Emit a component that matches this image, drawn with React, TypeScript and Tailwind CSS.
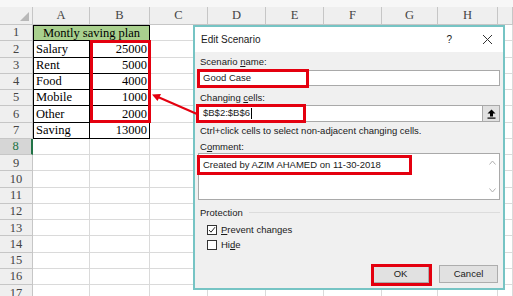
import React from "react";

const colWidths = "grid-cols-[33px_57px_60px_58px_58px_58px_58px_56px_60px_1fr]";
const letters = ["A", "B", "C", "D", "E", "F", "G", "H", ""];

const data: { label: string; value: string }[] = [
  { label: "Salary", value: "25000" },
  { label: "Rent", value: "5000" },
  { label: "Food", value: "4000" },
  { label: "Mobile", value: "1000" },
  { label: "Other", value: "2000" },
  { label: "Saving", value: "13000" },
];

function Sheet() {
  const rows = Array.from({ length: 17 }, (_, i) => i + 1);
  return (
    <div className="flex flex-col font-['Liberation_Serif',serif] text-[12.5px] text-black">
      <div className="h-[7px] bg-[#f7f7f7]" />
      <div className={`grid ${colWidths} h-[18px] bg-[#efefef] text-[#444]`}>
        <div className="relative border-r border-b border-[#c6c6c6]">
          <div className="absolute right-[3px] bottom-[3px] w-0 h-0 border-l-[9px] border-l-transparent border-b-[9px] border-b-[#b8b8b8]" />
        </div>
        {letters.map((l, i) => (
          <div key={i} className="flex items-center justify-center border-r border-b border-[#c6c6c6] leading-none">
            {l}
          </div>
        ))}
      </div>
      <div className={`grid ${colWidths} grid-rows-[repeat(17,16.27px)]`}>
        {rows.map((r) => {
          const selected = r === 8;
          const header = (
            <div
              key={`h${r}`}
              className={
                selected
                  ? "flex items-center justify-center bg-[#d6d6d6] text-[#217346] border-b border-[#c6c6c6] border-r-2 border-r-[#217346] leading-none"
                  : "flex items-center justify-center bg-[#efefef] text-[#444] border-r border-b border-[#c6c6c6] leading-none"
              }
            >
              {r}
            </div>
          );
          if (r === 1) {
            return (
              <React.Fragment key={r}>
                {header}
                <div className="col-span-2 flex items-center justify-center bg-[#a9d08e] border border-black leading-none">
                  Montly saving plan
                </div>
                {letters.slice(2).map((_, i) => (
                  <div key={i} className="border-r border-b border-[#dadada]" />
                ))}
              </React.Fragment>
            );
          }
          if (r <= 7) {
            const d = data[r - 2];
            return (
              <React.Fragment key={r}>
                {header}
                <div className="flex items-center pl-[2px] border-l border-r border-b border-black leading-none">
                  {d.label}
                </div>
                <div className="flex items-center justify-end pr-[2px] border-r border-b border-black leading-none">
                  {d.value}
                </div>
                {letters.slice(2).map((_, i) => (
                  <div key={i} className="border-r border-b border-[#dadada]" />
                ))}
              </React.Fragment>
            );
          }
          return (
            <React.Fragment key={r}>
              {header}
              {letters.map((_, i) => (
                <div key={i} className="border-r border-b border-[#dadada]" />
              ))}
            </React.Fragment>
          );
        })}
      </div>
    </div>
  );
}

function RedBox({ className }: { className: string }) {
  return <div className={`absolute border-[3px] border-[#e4000f] pointer-events-none ${className}`} />;
}

function Dialog() {
  return (
    <div className="absolute left-[193px] top-[25px] w-[312px] h-[265px] flex flex-col border-2 border-[#76c4c4] bg-[#f0f0f0] font-['Liberation_Sans',sans-serif] text-[9.5px] text-[#1a1a1a]">
      <div className="shrink-0 flex items-center h-[25px] bg-white pl-[6px] pr-[8px]">
        <span className="text-[10px]">Edit Scenario</span>
        <span className="ml-auto mr-[30px] text-[10px]">?</span>
        <svg width="11" height="11" viewBox="0 0 11 11" className="mr-[2px]">
          <path d="M1 1 L10 10 M10 1 L1 10" stroke="#333" strokeWidth="1" />
        </svg>
      </div>
      <div className="shrink-0 flex flex-col px-[3px] pt-[4px]">
        <div className="shrink-0 pl-[2px] h-[11px] leading-[11px]">
          Scenario <span className="underline">n</span>ame:
        </div>
        <div className="shrink-0 relative mt-[3px] h-[16px] bg-white border border-[#a9a9a9] flex items-center pl-[4px]">
          Good Case
          <RedBox className="left-[-2px] top-[-2px] w-[112px] h-[19px]" />
        </div>
        <div className="shrink-0 pl-[2px] mt-[6px] h-[11px] leading-[11px]">
          Changing <span className="underline">c</span>ells:
        </div>
        <div className="shrink-0 relative mt-[2px] h-[17px] flex">
          <div className="flex-1 bg-white border border-[#a9a9a9] flex items-center pl-[4px]">
            $B$2:$B$6<span className="ml-[1px] w-px h-[11px] bg-black" />
          </div>
          <div className="w-[17px] bg-[#e1e1e1] border border-[#a9a9a9] border-l-0 flex items-center justify-center">
            <svg width="9" height="10" viewBox="0 0 9 10">
              <path d="M4.5 0.5 L8.5 4.5 L6 4.5 L6 7.5 L3 7.5 L3 4.5 L0.5 4.5 Z" fill="#000" />
              <rect x="0.5" y="8.5" width="8" height="1.2" fill="#000" />
            </svg>
          </div>
          <RedBox className="left-[-2px] top-[-1px] w-[110px] h-[19px]" />
        </div>
        <div className="shrink-0 pl-[2px] mt-[3px] h-[11px] leading-[11px]">
          Ctrl+click cells to select non-adjacent changing cells.
        </div>
        <div className="shrink-0 pl-[2px] mt-[5px] h-[11px] leading-[11px]">
          C<span className="underline">o</span>mment:
        </div>
        <div className="shrink-0 relative mt-[1px] h-[47px] bg-white border border-[#a9a9a9] flex">
          <div className="flex-1 pl-[4px] pt-[4px]">Created by AZIM AHAMED on 11-30-2018</div>
          <div className="w-[14px] flex flex-col items-center justify-between py-[6px]">
            <svg width="7" height="5" viewBox="0 0 7 5">
              <path d="M0.5 4.5 L3.5 1 L6.5 4.5" fill="none" stroke="#b0b0b0" />
            </svg>
            <svg width="7" height="5" viewBox="0 0 7 5">
              <path d="M0.5 0.5 L3.5 4 L6.5 0.5" fill="none" stroke="#b0b0b0" />
            </svg>
          </div>
          <RedBox className="left-[-2px] top-[1px] w-[215px] h-[20px]" />
        </div>
        <div className="shrink-0 flex items-center mt-[7px] pl-[2px] h-[11px] leading-[11px]">
          <span>Protection</span>
          <div className="flex-1 ml-[6px] h-px bg-[#dcdcdc]" />
        </div>
        <div className="shrink-0 flex flex-col gap-[3px] mt-[6px] pl-[9px]">
          <label className="flex items-center gap-[4px] h-[12px] leading-[12px]">
            <span className="w-[10px] h-[10px] bg-white border border-[#333] flex items-center justify-center">
              <svg width="8" height="8" viewBox="0 0 8 8">
                <path d="M1 4 L3 6.2 L7 1.2" fill="none" stroke="#222" strokeWidth="1" />
              </svg>
            </span>
            <span>
              <span className="underline">P</span>revent changes
            </span>
          </label>
          <label className="flex items-center gap-[4px] h-[12px] leading-[12px]">
            <span className="w-[10px] h-[10px] bg-white border border-[#333]" />
            <span>
              Hi<span className="underline">d</span>e
            </span>
          </label>
        </div>
        <div className="shrink-0 flex justify-end gap-[10px] mt-[14px] pr-[2px]">
          <div className="relative w-[57px] h-[18px] bg-[#e1e1e1] border border-[#adadad] flex items-center justify-center">
            OK
            <RedBox className="left-[-2px] top-[-2px] w-[61px] h-[22px]" />
          </div>
          <div className="w-[59px] h-[18px] bg-[#e1e1e1] border border-[#adadad] flex items-center justify-center">
            Cancel
          </div>
        </div>
      </div>
    </div>
  );
}

export default function App() {
  return (
    <div className="relative w-[513px] h-[296px] overflow-hidden bg-white">
      <Sheet />
      <RedBox className="left-[90px] top-[40px] w-[61px] h-[83px]" />
      <Dialog />
      <svg className="absolute left-0 top-0 pointer-events-none" width="513" height="296">
        <line x1="197" y1="114" x2="158" y2="97" stroke="#e4000f" strokeWidth="2" />
        <path d="M152 94.5 L161 94 L157.5 101 Z" fill="#e4000f" />
      </svg>
    </div>
  );
}
